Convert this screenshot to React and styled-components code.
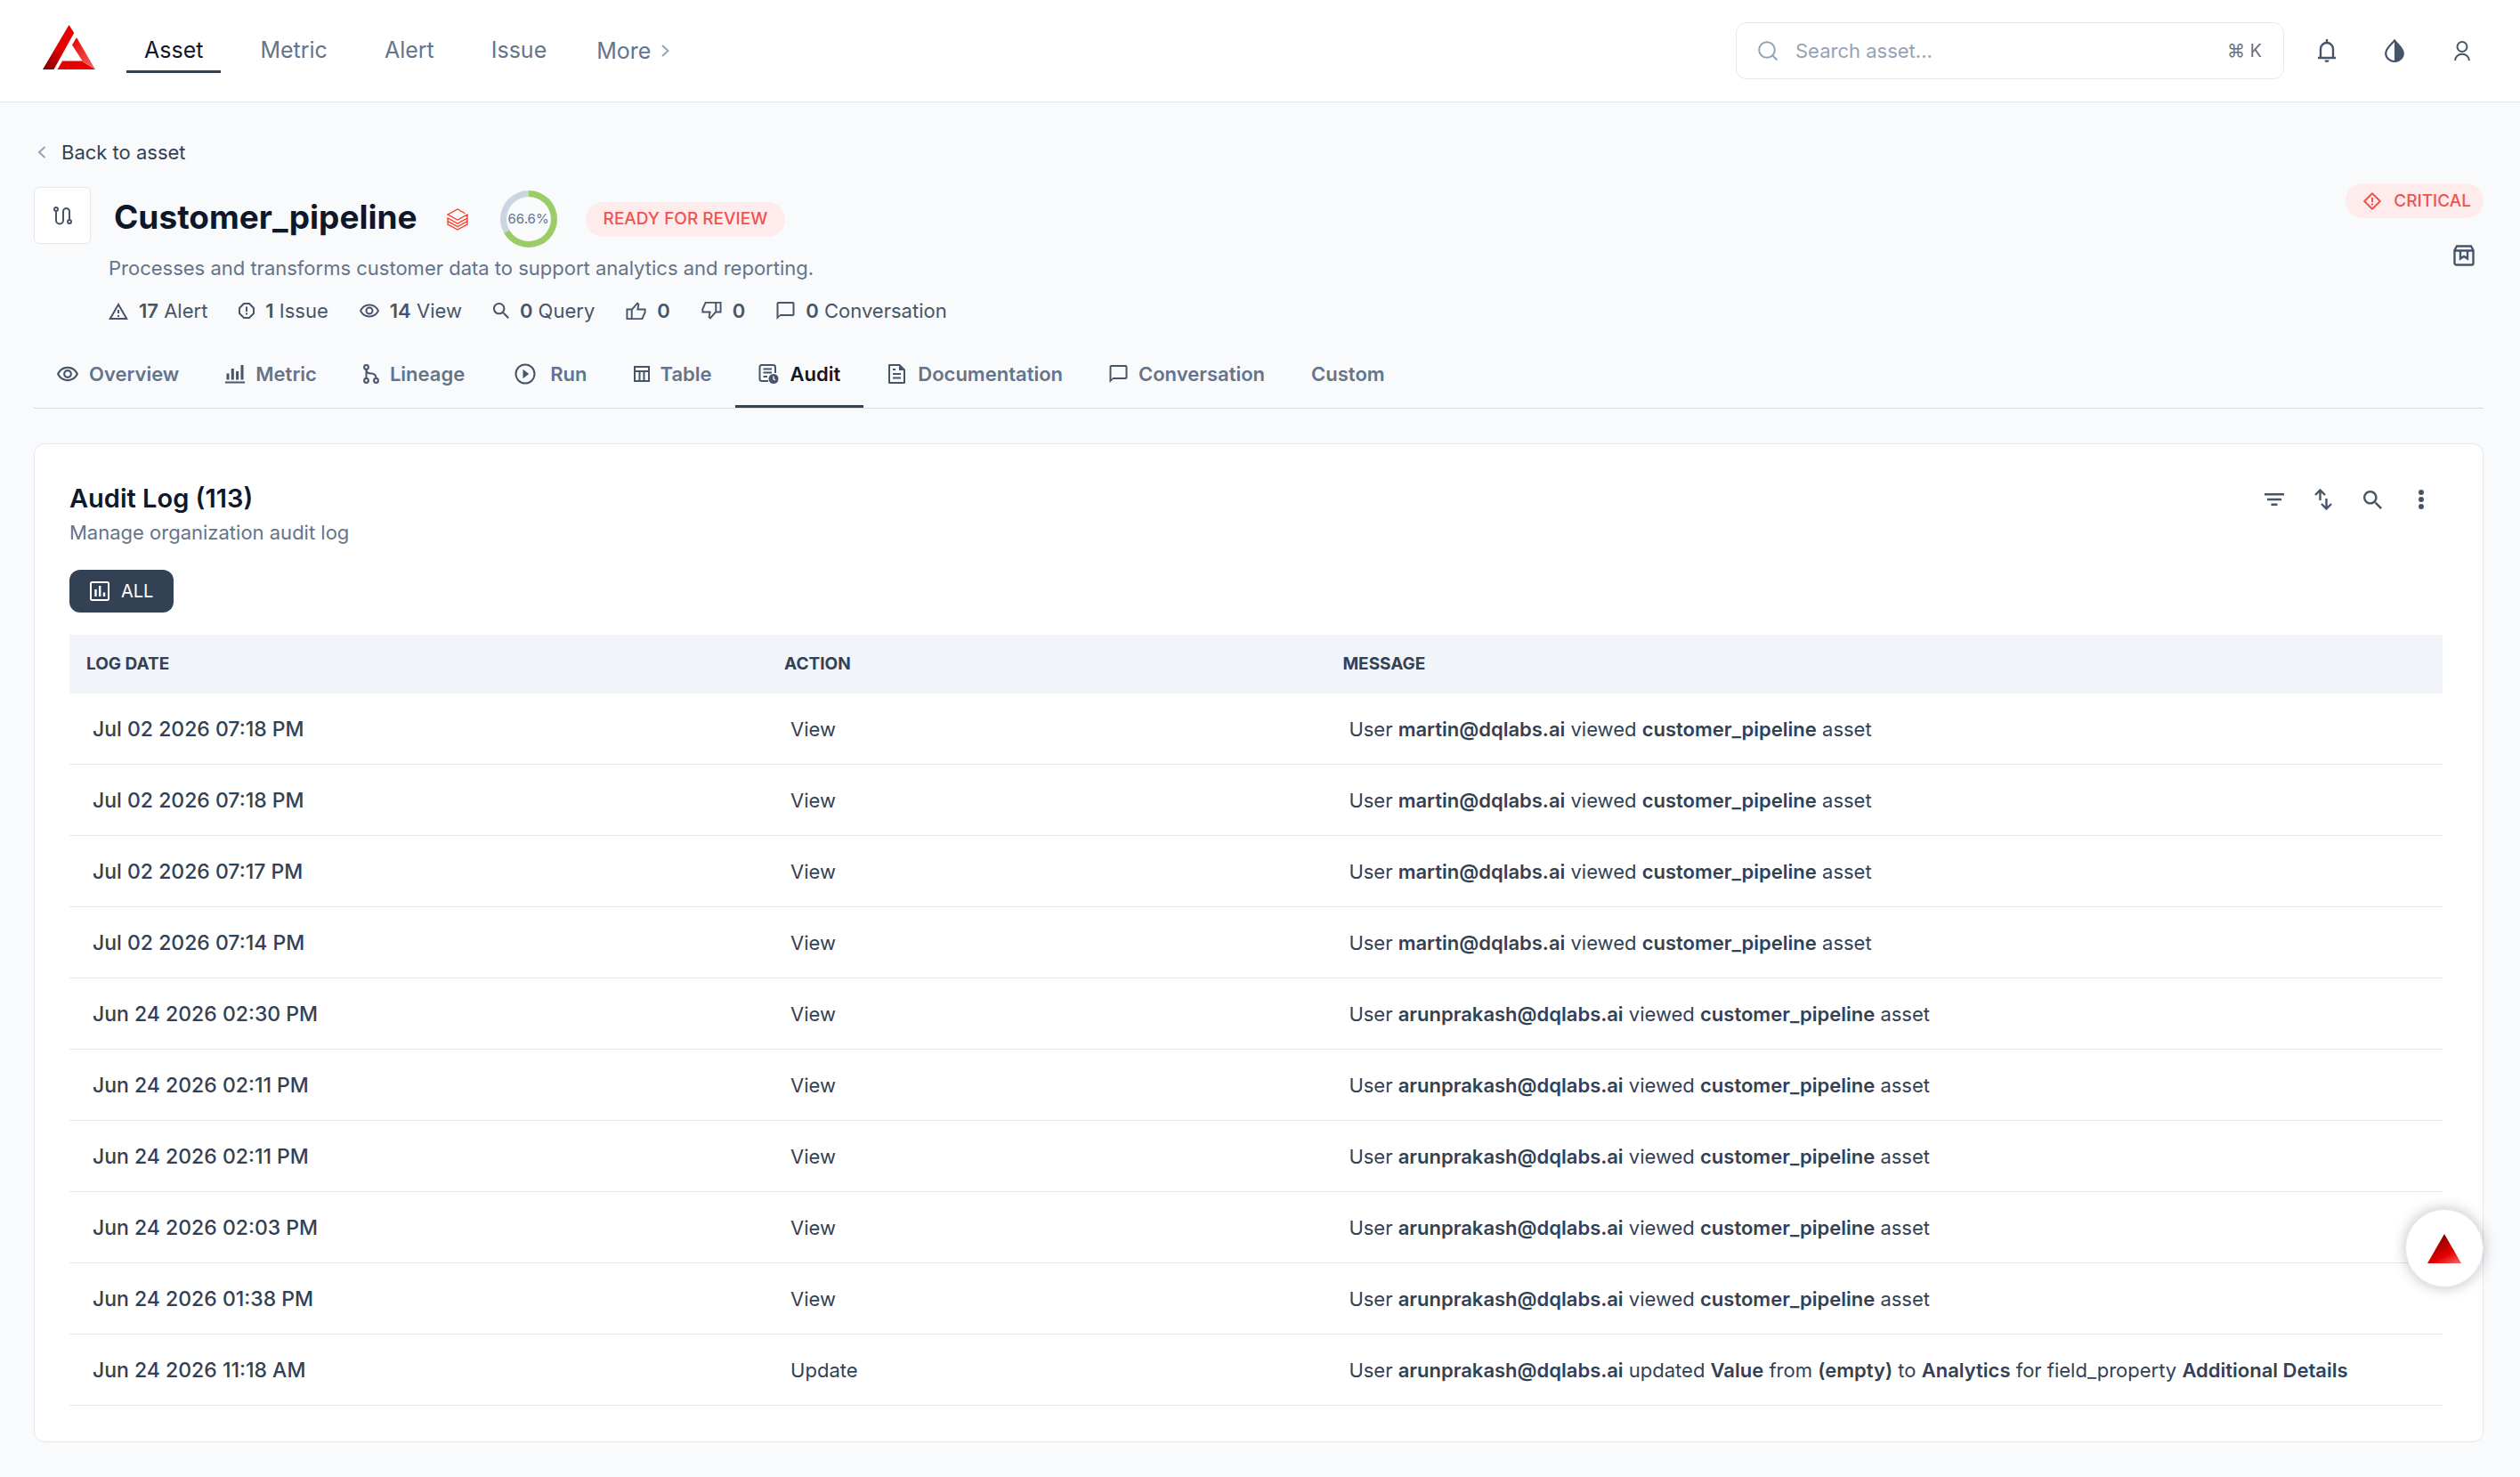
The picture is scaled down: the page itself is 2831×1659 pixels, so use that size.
import React from "react";
import styled, { createGlobalStyle } from "styled-components";

const GlobalStyle = createGlobalStyle`
  * {
    box-sizing: border-box;
  }

  body {
    margin: 0;
    background-color: #f9fafc;
    color: #334155;
    font-family: Inter, "Liberation Sans", sans-serif;
    font-size: 22px;
    line-height: 32px;
  }

  button, input {
    font: inherit;
    color: inherit;
  }

  a {
    color: inherit;
    text-decoration: none;
  }
`;

const Svg = styled.svg`
  display: block;
  flex: none;
`;

const Icon = ({ w, h, box, children }) => (
  <Svg
    width={w}
    height={h}
    viewBox={box || `0 0 ${w} ${h}`}
    fill="none"
    stroke="currentColor"
    strokeWidth="2"
    aria-hidden="true"
  >
    {children}
  </Svg>
);

const Solid = ({ d }) => <path d={d} fill="currentColor" stroke="none" />;

const SEARCH_PATH =
  "M15.5 14h-.79l-.28-.27C15.41 12.59 16 11.11 16 9.5 16 5.91 13.09 3 9.5 3S3 5.91 3 9.5 5.91 16 9.5 16c1.61 0 3.09-.59 4.23-1.57l.27.28v.79l5 4.99L20.49 19l-4.99-5zm-6 0C7.01 14 5 11.99 5 9.5S7.01 5 9.5 5 14 7.01 14 9.5 11.99 14 9.5 14z";
const EYE_PATH =
  "M12 6c3.79 0 7.17 2.13 8.82 5.5C19.17 14.87 15.79 17 12 17s-7.17-2.13-8.82-5.5C4.83 8.13 8.21 6 12 6m0-2C7 4 2.73 7.11 1 11.5 2.73 15.89 7 19 12 19s9.27-3.11 11-7.5C21.27 7.11 17 4 12 4z";
const CHAT_PATH =
  "M20 2H4c-1.1 0-2 .9-2 2v18l4-4h14c1.1 0 2-.9 2-2V4c0-1.1-.9-2-2-2zm0 14H6l-2 2V4h16v12z";
const WARNING_PATH =
  "M12 5.99 19.53 19H4.47L12 5.99M12 2 1 21h22L12 2zm1 14h-2v2h2v-2zm0-6h-2v4h2v-4z";

const EyeIcon = ({ w = 22, h = 16 }) => (
  <Icon w={w} h={h} box="1 3.5 22 16">
    <Solid d={EYE_PATH} />
    <circle cx="12" cy="11.5" r="3.5" />
  </Icon>
);

const ChatIcon = ({ w = 21, h = 20 }) => (
  <Icon w={w} h={h} box="2 2 20 20">
    <Solid d={CHAT_PATH} />
  </Icon>
);

const SearchIcon = ({ size = 18 }) => (
  <Icon w={size} h={size} box="3 3 17.5 17.5">
    <Solid d={SEARCH_PATH} />
  </Icon>
);

const WarningIcon = () => (
  <Icon w={22} h={19} box="1 2 22 19">
    <Solid d={WARNING_PATH} />
  </Icon>
);

const IssueIcon = () => (
  <Icon w={18} h={18}>
    <path d="M6 1h6l5 5v6l-5 5H6l-5-5V6z" strokeLinejoin="round" />
    <path d="M9 4.5V10M9 11.5v2" />
  </Icon>
);

const ThumbIcon = ({ down }) => (
  <Icon w={23} h={22} box="0 0 24 22">
    <g transform={down ? "rotate(180 12 11)" : undefined}>
      <path d="M1.5 9.5H7v11H1.5zM7 9.8l6.6-7.6L15 3.6l-1 5.9h8.6v3.3l-3.4 7.7H7" />
    </g>
  </Icon>
);

const BarsIcon = () => (
  <Icon w={22} h={22}>
    <path d="M0 20.5h22" />
    <path d="M3 17.5v-7M8.3 17.5V5M13.6 17.5V8M19 17.5V1" strokeWidth="3" />
  </Icon>
);

const LineageIcon = () => (
  <Icon w={18} h={22}>
    <circle cx="3.5" cy="3.5" r="2.4" />
    <circle cx="3.5" cy="18.5" r="2.4" />
    <circle cx="14.5" cy="18.5" r="2.4" />
    <path d="M3.5 6v10M3.5 6.5c0 3 2 4 5.5 4s5.5 1.5 5.5 5.5" />
  </Icon>
);

const RunIcon = () => (
  <Icon w={32} h={24} box="-4 0 32 24">
    <circle cx="12" cy="12" r="10.5" />
    <Solid d="M9.5 6.8v10.4l6.7-5.2z" />
  </Icon>
);

const TableIcon = () => (
  <Icon w={18} h={18}>
    <path d="M1 1h16v16H1zM1 6h16M6.5 6v11M11.5 6v11" />
  </Icon>
);

const AuditIcon = () => (
  <Icon w={24} h={22}>
    <path d="M11 19H4a2.5 2.5 0 0 1-2.5-2.5v-13C1.5 2 2.3 1 3.7 1h13C18.1 1 19 2 19 3.5V10M5.5 5.5H15M5.5 9.5H15M5.5 14H10" />
    <circle cx="17" cy="16.5" r="5.5" fill="currentColor" stroke="none" />
    <path d="M17 13.5v3.3l2 1.2" stroke="#f9fafc" strokeWidth="1.4" />
  </Icon>
);

const DocIcon = () => (
  <Icon w={23} h={22} box="-2 0 23 22">
    <path d="M1 1h11.5L18 6.5V21H1z" strokeLinejoin="round" />
    <path d="M5 6h3M5 11h9M5 15.5h9" />
    <Solid d="M12 1v6h6z" />
  </Icon>
);

const LogoIcon = () => (
  <Svg width="60" height="50" viewBox="0 0 60 50" role="img" aria-label="Home">
    <defs>
      <linearGradient id="logoLeft" x1="0" y1="1" x2="0.6" y2="0">
        <stop offset="0" stopColor="#7a0000" />
        <stop offset="0.6" stopColor="#e60000" />
      </linearGradient>
      <linearGradient id="logoRight" x1="0" y1="0" x2="0.8" y2="1">
        <stop offset="0" stopColor="#e60000" />
        <stop offset="1" stopColor="#f46060" />
      </linearGradient>
    </defs>
    <path d="M29.5 0l5.7 9L12.5 50H0z" fill="url(#logoLeft)" />
    <path d="M38 14l21 36-14.5-9.5L33 22.5z" fill="url(#logoRight)" />
    <path d="M22 40.5h22L59 50H16.5z" fill="#e60000" />
  </Svg>
);

const StackIcon = () => (
  <Icon w={24} h={25}>
    <path
      d="M20.5 5.7L12 1 1 7l11 6 11-6v4l-11 6-11-6v3.5l11 6 11-6V18l-11 6-11-6v-3.500M23 11v3.5"
      strokeWidth="1.3"
    />
  </Icon>
);

const Header = styled.header`
  display: flex;
  align-items: center;
  height: 115px;
  padding: 0 43px 0 48px;
  background-color: #fff;
  border-bottom: 1px solid #e2e8f0;
`;

const HomeLink = styled.a`
  padding-bottom: 8px;
`;

const Nav = styled.nav`
  display: flex;
  align-items: center;
  gap: 24px;
  margin-left: 34px;
  font-size: 25px;
  line-height: 30px;
  color: #64748b;
`;

const NavLink = styled.a`
  padding: 8px 20px;
  border-bottom: 3px solid ${props => (props.$active ? "#334155" : "transparent")};
  color: ${props => (props.$active ? "#0f172a" : "#64748b")};
`;

const MoreButton = styled.button`
  display: flex;
  align-items: center;
  gap: 12px;
  padding: 0 12px;
  border: none;
  background: none;
`;

const SearchBox = styled.label`
  display: flex;
  align-items: center;
  gap: 20px;
  flex: 0 1 616px;
  height: 64px;
  margin: 0 26px 0 auto;
  padding: 0 24px;
  border: 1px solid #e2e8f0;
  border-radius: 12px;
  color: #94a3b8;
`;

const SearchInput = styled.input`
  flex: 1;
  min-width: 0;
  padding: 0;
  border: none;
  outline: none;
  background: none;

  &::placeholder {
    color: #94a3b8;
    opacity: 1;
  }
`;

const Shortcut = styled.kbd`
  font-family: inherit;
  font-size: 20px;
  color: #6b7280;
`;

const Tools = styled.div`
  display: flex;
  align-items: center;
  gap: ${props => props.$gap}px;
`;

const IconButton = styled.button`
  display: flex;
  align-items: center;
  justify-content: center;
  width: 44px;
  height: 44px;
  padding: 0;
  border: none;
  background: none;
  color: #475569;
`;

const Main = styled.main`
  padding: 40px 41px 39px 38px;
`;

const BackLink = styled.a`
  display: flex;
  align-items: center;
  gap: 17px;
  width: fit-content;
  padding-left: 4px;
`;

const Chevron = styled.span`
  color: #94a3b8;
`;

const AssetHead = styled.section`
  display: flex;
  align-items: flex-start;
  gap: 20px;
  margin-top: 23px;
`;

const AssetIcon = styled.div`
  display: flex;
  align-items: center;
  justify-content: center;
  flex: none;
  width: 64px;
  height: 64px;
  border: 1px solid #e2e8f0;
  border-radius: 6px;
  background-color: #fff;
  color: #475569;
`;

const AssetInfo = styled.div`
  flex: 1;
  padding-top: 4px;
`;

const TitleRow = styled.div`
  display: flex;
  align-items: center;
  height: 64px;
  padding-left: 6px;
`;

const Title = styled.h1`
  margin: 0 33px 4px 0;
  font-size: 37px;
  font-weight: 700;
  line-height: 48px;
  color: #0f172a;
`;

const SourceMark = styled.span`
  margin-right: 36px;
  color: #ff3621;
`;

const Ring = styled.div`
  width: 64px;
  height: 64px;
  margin-right: 32px;
  padding: 7px;
  border-radius: 50%;
  background: conic-gradient(#9ccc65 66.6%, #cbd5e1 0);
`;

const RingLabel = styled.div`
  display: flex;
  align-items: center;
  justify-content: center;
  height: 50px;
  border-radius: 50%;
  background-color: #f9fafc;
  font-size: 15px;
  color: #64748b;
`;

const Pill = styled.span`
  display: flex;
  align-items: center;
  gap: 14px;
  height: 39px;
  padding: 0 ${props => props.$end || 20}px 0 20px;
  border-radius: 20px;
  background-color: #feebeb;
  color: #ef5350;
  font-size: 19px;
  font-weight: 500;
`;

const Description = styled.p`
  margin: 7px 0 16px;
  color: #64748b;
`;

const Stats = styled.ul`
  display: flex;
  gap: 35px;
  margin: 0;
  padding: 0;
  list-style: none;
  color: #475569;
`;

const Stat = styled.li`
  display: flex;
  align-items: center;
  gap: 12px;

  b {
    font-weight: 600;
  }
`;

const AssetMeta = styled.div`
  display: flex;
  flex-direction: column;
  align-items: flex-end;
  gap: 20px;
  margin-top: -4px;
`;

const Tabs = styled.nav`
  display: flex;
  margin-top: 19px;
  border-bottom: 1px solid #d9dde3;
`;

const Tab = styled.a`
  display: flex;
  align-items: center;
  gap: 12px;
  padding: 20px 26px 19px;
  border-bottom: 3px solid ${props => (props.$active ? "#334155" : "transparent")};
  color: ${props => (props.$active ? "#0f172a" : "#64748b")};
  font-weight: 600;

  svg {
    color: #475569;
  }
`;

const Card = styled.section`
  margin-top: 39px;
  padding: 40px 45px 40px 39px;
  border: 1px solid #e2e8f0;
  border-radius: 12px;
  background-color: #fff;
`;

const CardHead = styled.div`
  display: flex;
  align-items: flex-start;
  justify-content: space-between;
  padding-right: 2px;
`;

const CardTitle = styled.h2`
  margin: 0;
  padding-top: 3px;
  font-size: 29px;
  font-weight: 600;
  line-height: 36px;
  color: #0f172a;
`;

const CardSubtitle = styled.p`
  margin: 4px 0 26px;
  color: #64748b;
`;

const FilterButton = styled.button`
  display: flex;
  align-items: center;
  gap: 13px;
  height: 48px;
  margin-bottom: 25px;
  padding: 0 23px;
  border: none;
  border-radius: 12px;
  background-color: #334155;
  color: #fff;
  font-size: 20px;
`;

const Table = styled.table`
  width: 100%;
  border-spacing: 0;
  table-layout: fixed;
`;

const HeadCell = styled.th`
  width: ${props => props.$width};
  height: 66px;
  padding: 0 19px;
  background-color: #f1f4f9;
  font-size: 19px;
  font-weight: 700;
  text-align: left;
`;

const Cell = styled.td`
  height: 80px;
  padding: 0 26px;
  border-bottom: 1px solid #e2e8f0;
  font-size: ${props => (props.$date ? 23 : 22)}px;
  font-weight: ${props => (props.$date ? 500 : 400)};

  b {
    font-weight: 600;
  }
`;

const ChatButton = styled.button`
  position: fixed;
  right: 41px;
  bottom: 213px;
  display: flex;
  align-items: center;
  justify-content: center;
  width: 88px;
  height: 88px;
  padding: 0;
  border: 1px solid #e2e8f0;
  border-radius: 50%;
  background-color: #fff;
  box-shadow: 0 0 16px rgba(0, 0, 0, 0.25);
`;

const navItems = ["Asset", "Metric", "Alert", "Issue"];

const stats = [
  { icon: <WarningIcon />, count: 17, label: "Alert" },
  { icon: <IssueIcon />, count: 1, label: "Issue" },
  { icon: <EyeIcon />, count: 14, label: "View" },
  { icon: <SearchIcon />, count: 0, label: "Query" },
  { icon: <ThumbIcon />, count: 0 },
  { icon: <ThumbIcon down />, count: 0 },
  { icon: <ChatIcon />, count: 0, label: "Conversation" }
];

const tabs = [
  { label: "Overview", icon: <EyeIcon w={24} h={18} /> },
  { label: "Metric", icon: <BarsIcon /> },
  { label: "Lineage", icon: <LineageIcon /> },
  { label: "Run", icon: <RunIcon /> },
  { label: "Table", icon: <TableIcon /> },
  { label: "Audit", icon: <AuditIcon />, active: true },
  { label: "Documentation", icon: <DocIcon /> },
  { label: "Conversation", icon: <ChatIcon /> },
  { label: "Custom" }
];

const viewed = (date, user) => ({
  date,
  action: "View",
  message: (
    <>
      User <b>{user}@dqlabs.ai</b> viewed <b>customer_pipeline</b> asset
    </>
  )
});

const rows = [
  viewed("Jul 02 2026 07:18 PM", "martin"),
  viewed("Jul 02 2026 07:18 PM", "martin"),
  viewed("Jul 02 2026 07:17 PM", "martin"),
  viewed("Jul 02 2026 07:14 PM", "martin"),
  viewed("Jun 24 2026 02:30 PM", "arunprakash"),
  viewed("Jun 24 2026 02:11 PM", "arunprakash"),
  viewed("Jun 24 2026 02:11 PM", "arunprakash"),
  viewed("Jun 24 2026 02:03 PM", "arunprakash"),
  viewed("Jun 24 2026 01:38 PM", "arunprakash"),
  {
    date: "Jun 24 2026 11:18 AM",
    action: "Update",
    message: (
      <>
        User <b>arunprakash@dqlabs.ai</b> updated <b>Value</b> from <b>(empty)</b> to{" "}
        <b>Analytics</b> for field_property <b>Additional Details</b>
      </>
    )
  }
];

const TopBar = () => (
  <Header>
    <HomeLink href="#home">
      <LogoIcon />
    </HomeLink>
    <Nav>
      {navItems.map((item, i) => (
        <NavLink key={item} href={`#${item.toLowerCase()}`} $active={i === 0}>
          {item}
        </NavLink>
      ))}
      <MoreButton type="button">
        More
        <Icon w={9} h={14}>
          <path d="M1 1l6.5 6L1 13" stroke="#94a3b8" />
        </Icon>
      </MoreButton>
    </Nav>
    <SearchBox>
      <Icon w={22} h={22}>
        <circle cx="10" cy="10" r="8.8" />
        <path d="M16 16l5.5 5.5" />
      </Icon>
      <SearchInput type="text" placeholder="Search asset..." aria-label="Search asset" />
      <Shortcut>⌘ K</Shortcut>
    </SearchBox>
    <Tools $gap={32}>
      <IconButton type="button" aria-label="Notifications">
        <Icon w={22} h={26}>
          <path d="M4 20.5V11a7 7 0 0 1 14 0v9.5M1 21h20M11 0v4" strokeWidth="2.4" />
          <Solid d="M8.5 23.5h5a2.5 2.5 0 0 1-5 0z" />
        </Icon>
      </IconButton>
      <IconButton type="button" aria-label="Theme">
        <Icon w={22} h={26}>
          <path
            d="M11 1.5C7 6.5 1.2 10.5 1.2 15.8a9.8 9.2 0 0 0 19.6 0C20.8 10.5 15 6.5 11 1.5z"
            strokeWidth="2.2"
          />
          <Solid d="M11 1.5C15 6.5 20.8 10.5 20.8 15.8A9.8 9.2 0 0 1 11 25z" />
        </Icon>
      </IconButton>
      <IconButton type="button" aria-label="Account">
        <Icon w={18} h={22}>
          <circle cx="9" cy="6.5" r="5.5" />
          <path d="M1.2 22c0-4.500 3.5-7.300 7.800-7.300s7.800 2.800 7.800 7.300" />
        </Icon>
      </IconButton>
    </Tools>
  </Header>
);

const AssetHeader = () => (
  <AssetHead>
    <AssetIcon>
      <Icon w={21} h={21}>
        <circle cx="3" cy="3" r="2" />
        <circle cx="18" cy="17" r="2" />
        <path d="M3 5v10.5a4 4 0 0 0 8 0v-10a3.5 3.5 0 0 1 7 0V15" />
      </Icon>
    </AssetIcon>
    <AssetInfo>
      <TitleRow>
        <Title>Customer_pipeline</Title>
        <SourceMark>
          <StackIcon />
        </SourceMark>
        <Ring>
          <RingLabel>66.6%</RingLabel>
        </Ring>
        <Pill>READY FOR REVIEW</Pill>
      </TitleRow>
      <Description>
        Processes and transforms customer data to support analytics and reporting.
      </Description>
      <Stats>
        {stats.map((stat, i) => (
          <Stat key={i}>
            {stat.icon}
            <span>
              <b>{stat.count}</b> {stat.label}
            </span>
          </Stat>
        ))}
      </Stats>
    </AssetInfo>
    <AssetMeta>
      <Pill $end={14}>
        <Icon w={20} h={20}>
          <path d="M10 1.2L18.8 10 10 18.8 1.2 10z" strokeLinejoin="round" />
          <path d="M10 6v5M10 12.5v2" />
        </Icon>
        CRITICAL
      </Pill>
      <IconButton type="button" aria-label="Save to collection">
        <Icon w={24} h={24}>
          <path
            d="M1.5 6L4 1.5h16L22.5 6v14.5a2 2 0 0 1-2 2h-17a2 2 0 0 1-2-2zM1.5 6.5h21M8 7v8.5l4-2.5 4 2.5V7"
            strokeWidth="2.4"
          />
        </Icon>
      </IconButton>
    </AssetMeta>
  </AssetHead>
);

const AuditLog = () => (
  <Card>
    <CardHead>
      <div>
        <CardTitle>Audit Log (113)</CardTitle>
        <CardSubtitle>Manage organization audit log</CardSubtitle>
      </div>
      <Tools $gap={11}>
        <IconButton type="button" aria-label="Filter">
          <Icon w={22} h={14}>
            <path d="M0 1.2h22M3 7h16M7.5 12.8h7" strokeWidth="2.4" />
          </Icon>
        </IconButton>
        <IconButton type="button" aria-label="Sort">
          <Icon w={20} h={24}>
            <path
              d="M6.5 13V2M1 7l5.5-5.5L12 7M13.5 11v11M8 17l5.5 5.5L19 17"
              strokeWidth="2.4"
            />
          </Icon>
        </IconButton>
        <IconButton type="button" aria-label="Search log">
          <SearchIcon size={21} />
        </IconButton>
        <IconButton type="button" aria-label="More options">
          <Icon w={6} h={22}>
            <Solid d="M0 3a3 3 0 0 1 6 0a3 3 0 0 1-6 0M0 11a3 3 0 0 1 6 0a3 3 0 0 1-6 0M0 19a3 3 0 0 1 6 0a3 3 0 0 1-6 0" />
          </Icon>
        </IconButton>
      </Tools>
    </CardHead>
    <FilterButton type="button">
      <Icon w={22} h={22}>
        <rect x="1" y="1" width="20" height="20" rx="1.5" />
        <path d="M6.5 17V9M11.2 17V5M16 17v-4.5" strokeWidth="2.4" />
      </Icon>
      ALL
    </FilterButton>
    <Table>
      <thead>
        <tr>
          <HeadCell $width="calc(100% * 5 / 17)">LOG DATE</HeadCell>
          <HeadCell $width="calc(100% * 4 / 17)">ACTION</HeadCell>
          <HeadCell>MESSAGE</HeadCell>
        </tr>
      </thead>
      <tbody>
        {rows.map((row, i) => (
          <tr key={i}>
            <Cell $date>{row.date}</Cell>
            <Cell>{row.action}</Cell>
            <Cell>{row.message}</Cell>
          </tr>
        ))}
      </tbody>
    </Table>
  </Card>
);

const App = () => {
  return (
    <>
      <GlobalStyle />
      <TopBar />
      <Main>
        <BackLink href="#assets">
          <Chevron>
            <Icon w={10} h={14}>
              <path d="M8.5 1L2 7l6.5 6" />
            </Icon>
          </Chevron>
          Back to asset
        </BackLink>
        <AssetHeader />
        <Tabs>
          {tabs.map(tab => (
            <Tab key={tab.label} href={`#${tab.label.toLowerCase()}`} $active={tab.active}>
              {tab.icon}
              {tab.label}
            </Tab>
          ))}
        </Tabs>
        <AuditLog />
      </Main>
      <ChatButton type="button" aria-label="Open assistant">
        <Svg width="38" height="33" viewBox="0 0 38 33">
          <defs>
            <linearGradient id="chatMark" x1="0.3" y1="0" x2="0.9" y2="1">
              <stop offset="0" stopColor="#7a0000" />
              <stop offset="0.65" stopColor="#e60000" />
              <stop offset="1" stopColor="#f46060" />
            </linearGradient>
          </defs>
          <path d="M19 0l19 33H0z" fill="url(#chatMark)" />
        </Svg>
      </ChatButton>
    </>
  );
};

export default App;
